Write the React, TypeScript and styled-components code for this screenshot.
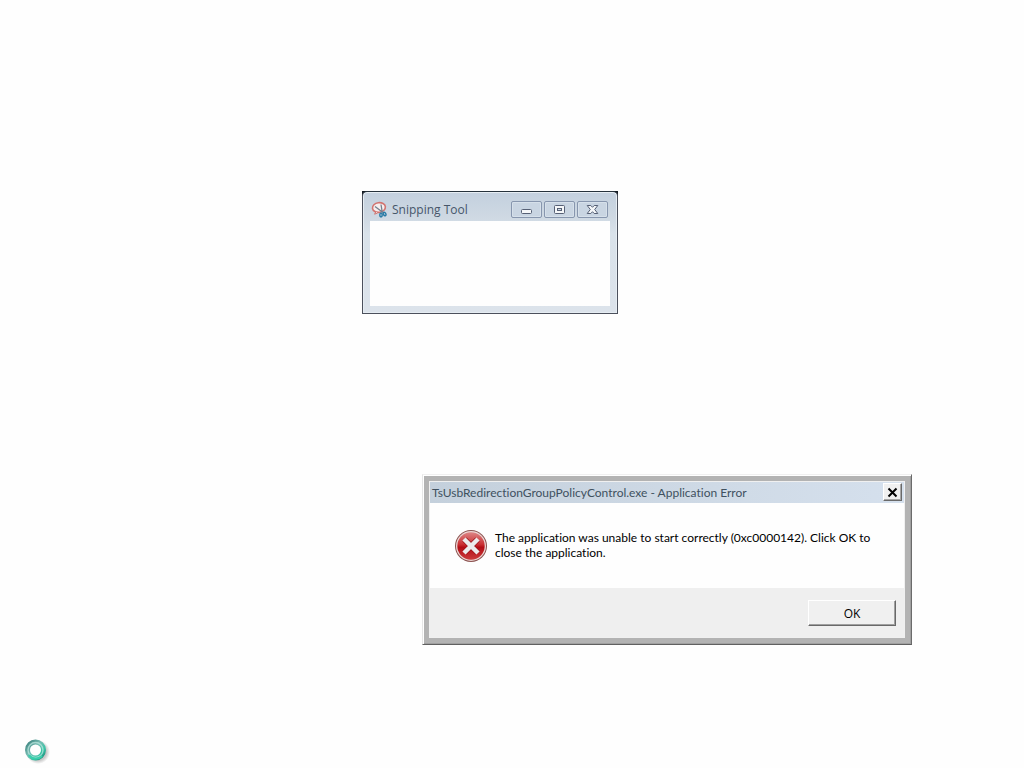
import React from "react";
import styled, { createGlobalStyle } from "styled-components";

const GlobalStyle = createGlobalStyle`
  *, *::before, *::after { box-sizing: border-box; }
  body { margin: 0; background: #fefefe; font: 12px/15px "Open Sans", "Noto Sans", sans-serif; color: #000; }
  button { font: inherit; color: inherit; padding: 0; margin: 0; }
  h2, p { margin: 0; font: inherit; }
`;

const Desktop = styled.main`
  position: relative;
  min-height: 100vh;
  overflow: hidden;
`;

const Placed = styled.div<{ $x: number; $y: number }>`
  position: absolute;
  left: ${(p) => p.$x}px;
  top: ${(p) => p.$y}px;
`;

const Corners = styled.div`
  background: linear-gradient(#101820 0 8px, transparent 8px);
`;

const ToolWindow = styled.section`
  width: 256px;
  display: flex;
  flex-direction: column;
  padding: 0 7px 7px;
  border: 1px solid #4b505c;
  border-top-color: #26323c;
  border-radius: 5px 5px 0 0;
  background: linear-gradient(#c3d0de, #cfd9e3 26px, #d9e2ea 42px, #dce3eb);
  box-shadow: inset 0 0 0 1px #e6edf3;
`;

const ToolTitleBar = styled.header`
  height: 29px;
  padding: 6px 2px 0 1px;
  display: flex;
  align-items: center;
  gap: 3px;
  color: #46566a;
`;

const Title = styled.h2`
  flex: 1;
  white-space: nowrap;
`;

const Controls = styled.div`
  display: flex;
  gap: 2px;
`;

const ControlButton = styled.button`
  width: 31px;
  height: 17px;
  display: grid;
  place-items: center;
  border: 1px solid #8796ae;
  border-radius: 2px;
  background: #c9d5e2;
  box-shadow: inset 0 0 0 1px #d6e0ea;
`;

const ToolBody = styled.div`
  height: 85px;
  background: #fefefe;
`;

const ErrorWindow = styled.section`
  width: 490px;
  border: 1px solid;
  border-color: #f0f0f0 #6b6b6b #606060 #e6e6e6;
  background: #b3b3b3;
  box-shadow: inset 1px 1px #fff, inset -1px -1px #a0a0a0;
  padding: 6px;
  font-family: Lato, "Open Sans", sans-serif;
  font-variant-ligatures: none;
`;

const ErrorFrame = styled.div`
  border: 1px solid #f0f0f0;
`;

const ErrorTitleBar = styled.header`
  height: 21px;
  padding: 0 2px 1px;
  display: flex;
  align-items: center;
  background: linear-gradient(90deg, #c4d0dc, #cfdae6 60%, #d5e0ed);
  color: #40515f;
`;

const CloseButton = styled.button`
  width: 19px;
  height: 18px;
  display: grid;
  place-items: center;
  border: 1px solid;
  border-color: #fff #696969 #696969 #fff;
  background: #f0f0f0;
  box-shadow: inset -1px -1px #a7a7a7;
`;

const Message = styled.div`
  height: 85px;
  padding: 26px 24px 0;
  display: flex;
  gap: 7px;
  background: #fefefe;
`;

const MessageText = styled.p`
  flex: 1;
  padding-top: 1px;
`;

const Footer = styled.footer`
  padding: 12px 8px 11px;
  display: flex;
  justify-content: flex-end;
  background: #efefef;
`;

const OkButton = styled.button`
  width: 88px;
  height: 26px;
  border: 1px solid;
  border-color: #fff #696969 #696969 #fff;
  background: #f0f0f0;
  box-shadow: inset -1px -1px #a0a0a0;
  font-family: "Open Sans", sans-serif;
`;

const SnipIcon = () => (
  <svg width="18" height="18" viewBox="0 0 18 18" aria-hidden="true">
    <ellipse cx="8" cy="6.5" rx="6.5" ry="4.8" fill="#f7eeee" stroke="#d27470" strokeWidth="1.6" transform="rotate(-8 8 7)" />
    <path d="M5 10.5 3.6 13.2 6.5 12" fill="#eee" stroke="#d27470" strokeWidth="1" />
    <path d="M4 5.5 12 11.5M10 3.5l1.3 8" stroke="#74808e" strokeWidth="1.3" fill="none" />
    <ellipse cx="10" cy="14" rx="1.2" ry="1.9" fill="none" stroke="#287aa5" strokeWidth="1.5" />
    <ellipse cx="13.6" cy="13" rx="1.2" ry="1.9" fill="none" stroke="#287aa5" strokeWidth="1.5" transform="rotate(-30 13.6 13)" />
  </svg>
);

const MinimizeIcon = () => (
  <svg width="13" height="11" viewBox="0 0 13 11" aria-hidden="true">
    <rect x="1.5" y="5.5" width="10" height="4" rx="1" fill="#f5f7f9" stroke="#566075" />
  </svg>
);

const MaximizeIcon = () => (
  <svg width="13" height="11" viewBox="0 0 13 11" aria-hidden="true">
    <rect x="1.5" y="1.5" width="10" height="8" rx="1" fill="#f5f7f9" stroke="#566075" />
    <rect x="4.5" y="4.5" width="4" height="2" fill="#d1dce6" stroke="#566075" />
  </svg>
);

const CloseIcon = () => (
  <svg width="13" height="11" viewBox="0 0 13 11" aria-hidden="true">
    <path d="M1.2 1.5h3.6l1.7 1.8 1.7-1.8h3.6L8.7 5.5l3.1 4H8.2L6.5 7.7 4.8 9.5H1.2l3.1-4z" fill="#f5f7f9" stroke="#566075" strokeLinejoin="round" />
  </svg>
);

const BoldCross = () => (
  <svg width="11" height="11" viewBox="0 0 11 11" aria-hidden="true">
    <path d="m1.5 1.5 8 8m0-8-8 8" stroke="#000" strokeWidth="2" />
  </svg>
);

const ErrorIcon = () => (
  <svg width="34" height="34" viewBox="0 0 34 34" role="img" aria-label="Error">
    <defs>
      <linearGradient id="errorFill" x1="0" y1="0" x2="0" y2="1">
        <stop offset="0" stopColor="#dd8585" />
        <stop offset=".45" stopColor="#c92e31" />
        <stop offset=".55" stopColor="#b30d15" />
        <stop offset="1" stopColor="#cb3c3c" />
      </linearGradient>
    </defs>
    <circle cx="17" cy="17" r="16" fill="#8c5350" />
    <circle cx="17" cy="17" r="15" fill="#edd7d5" />
    <circle cx="17" cy="17" r="13.7" fill="url(#errorFill)" />
    <path d="m10.5 10.5 13 13m0-13-13 13" stroke="#9d161b" strokeWidth="6" />
    <path d="m10 10 14 14m0-14-14 14" stroke="#ececec" strokeWidth="4.5" />
  </svg>
);

const BusyRing = () => (
  <svg width="28" height="28" viewBox="0 0 28 28" role="img" aria-label="Busy">
    <defs>
      <linearGradient id="ringFill" x1="0" y1="0" x2="1" y2="1">
        <stop offset="0" stopColor="#3e8580" />
        <stop offset=".4" stopColor="#78bdb4" />
        <stop offset=".75" stopColor="#35c4a5" />
        <stop offset="1" stopColor="#218c7c" />
      </linearGradient>
      <radialGradient id="ringShadow">
        <stop offset=".7" stopColor="#777" stopOpacity=".4" />
        <stop offset="1" stopColor="#777" stopOpacity="0" />
      </radialGradient>
    </defs>
    <circle cx="15" cy="15" r="12" fill="url(#ringShadow)" />
    <circle cx="12.5" cy="13" r="8" fill="#fefefe" stroke="url(#ringFill)" strokeWidth="5" />
    <circle cx="12.5" cy="13" r="7.5" fill="none" stroke="#c2e9e2" strokeWidth="1.4" opacity=".7" />
    <path d="M6 18a8.6 8.6 0 0 0 13 1" fill="none" stroke="#38d0ac" strokeWidth="2" />
  </svg>
);

export default function App() {
  return (
    <>
      <GlobalStyle />
      <Desktop>
        <Placed $x={362} $y={191}>
          <Corners>
            <ToolWindow aria-labelledby="tool-title">
              <ToolTitleBar>
                <SnipIcon />
                <Title id="tool-title">Snipping Tool</Title>
                <Controls>
                  <ControlButton type="button" aria-label="Minimize"><MinimizeIcon /></ControlButton>
                  <ControlButton type="button" aria-label="Maximize"><MaximizeIcon /></ControlButton>
                  <ControlButton type="button" aria-label="Close"><CloseIcon /></ControlButton>
                </Controls>
              </ToolTitleBar>
              <ToolBody />
            </ToolWindow>
          </Corners>
        </Placed>
        <Placed $x={422} $y={474}>
          <ErrorWindow role="alertdialog" aria-labelledby="error-title" aria-describedby="error-text">
            <ErrorFrame>
              <ErrorTitleBar>
                <Title id="error-title">TsUsbRedirectionGroupPolicyControl.exe - Application Error</Title>
                <CloseButton type="button" aria-label="Close"><BoldCross /></CloseButton>
              </ErrorTitleBar>
              <Message>
                <ErrorIcon />
                <MessageText id="error-text">
                  The application was unable to start correctly (0xc0000142). Click OK to
                  <br />
                  close the application.
                </MessageText>
              </Message>
              <Footer>
                <OkButton type="button">OK</OkButton>
              </Footer>
            </ErrorFrame>
          </ErrorWindow>
        </Placed>
        <Placed $x={23} $y={737}>
          <BusyRing />
        </Placed>
      </Desktop>
    </>
  );
}
